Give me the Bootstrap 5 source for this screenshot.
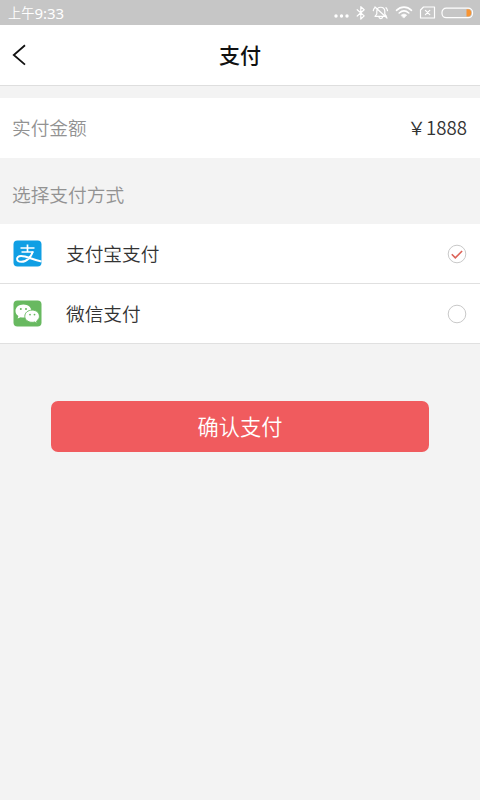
<!DOCTYPE html>
<html lang="zh-CN">
<head>
<meta charset="utf-8">
<meta name="viewport" content="width=device-width, initial-scale=1">
<title>支付</title>
<link href="https://cdn.jsdelivr.net/npm/bootstrap@5.3.0/dist/css/bootstrap.min.css" rel="stylesheet">
<style>
body{background:#f3f3f3;font-family:"Noto Sans CJK SC",sans-serif;font-size:18.7px;font-weight:350;line-height:28px;color:#333;min-height:800px}
svg{display:block;flex:none}
.status-bar{height:25px;background:#c6c6c6;color:#fff;font-size:13.2px;padding:1px 6px 0 8px}
.clock{font-family:"Noto Sans",sans-serif;font-size:15px;font-weight:400;line-height:24px}
.title-bar{height:61px;border-bottom:1px solid #dedede}
.title-bar h1{font-size:21px;font-weight:500;color:#111;line-height:30px;padding-bottom:2px}
.back{width:40px;height:60px}
.amount{height:60px;margin-top:12px;padding:0 13px 2px 12px}
.muted{color:#929292}
.section-label{height:66px;padding:6px 12px 0}
.method{height:60px;padding:0 13px;border-bottom:1px solid #e0e0e0;cursor:pointer}
.method-name{margin-left:24px;padding-bottom:2px}
.confirm{margin:56.5px 51px 0;height:51.5px;border-radius:7px;background:#f05b5e;color:#fff;font-size:21.2px;font-weight:350}
.confirm:hover{background:#e44f53;color:#fff}
</style>
<script src="https://cdn.jsdelivr.net/npm/bootstrap@5.3.0/dist/js/bootstrap.bundle.min.js"></script>
</head>
<body>
<div class="status-bar d-flex align-items-center justify-content-between">
  <div class="d-flex align-items-center"><span>上午</span><span class="clock">9:33</span></div>
  <svg width="142" height="24" viewBox="332 .5 142 24" fill="none" stroke="#fff" stroke-width="1.2" stroke-linecap="round" stroke-linejoin="round">
    <g fill="#fff" stroke="none"><circle cx="336" cy="15.5" r="1.7"/><circle cx="341.5" cy="15.5" r="1.7"/><circle cx="347" cy="15.5" r="1.7"/></g>
    <path d="M357.2 9.2l7 6.2-3.4 3.1V6.2l3.4 3.1-7 6.2"/>
    <path d="M375 15.8h11.5l-1.7-2.3v-2.7c0-5.400-8-5.400-8 0v2.700zM378.800 16.200c.4 2.600 3.600 2.600 4 0M375 6.500l12 11M373.300 10.200c.2-1.300.6-2.200 1.500-3M387.500 10.200c-.2-1.300-.6-2.200-1.500-3"/>
    <path d="M396.500 9.800c4.500-4.200 10.500-4.200 15 0M399.200 12.500c3-2.600 6.600-2.600 9.600 0" stroke-width="1.600"/>
    <path d="M401.400 14.600c1.600-1.300 3.600-1.300 5.200 0L404 17.300z" fill="#fff" stroke-width=".8"/>
    <path d="M423.500 6.500h11v11h-14v-8zM425.400 9.800l4.400 4.400M429.800 9.800l-4.400 4.400"/>
    <rect x="442" y="7.600" width="30.500" height="9.600" rx="4.200"/>
    <path d="M466.500 8.800h1.800c4 0 4 7.200 0 7.200h-1.800z" fill="#f79433" stroke="none"/>
  </svg>
</div>
<header class="title-bar bg-white d-flex align-items-center">
  <a href="#" class="back d-flex align-items-center" aria-label="返回">
    <svg width="40" height="30" viewBox="0 40 40 30" fill="none" stroke="#111" stroke-width="1.8"><path d="M25 45.3L13.800 55 25 64.600"/></svg>
  </a>
  <h1 class="flex-grow-1 text-center mb-0">支付</h1>
  <div class="back"></div>
</header>
<main>
  <section class="amount bg-white d-flex align-items-center justify-content-between">
    <span class="muted">实付金额</span><span>￥1888</span>
  </section>
  <div class="section-label muted d-flex align-items-center">选择支付方式</div>
  <div class="method bg-white d-flex align-items-center">
    <svg width="29" height="27" viewBox="0 0 29 27">
      <rect x=".5" y=".5" width="28" height="26" rx="4" fill="#109fe4"/>
      <g fill="none" stroke="#fff" stroke-width="1.700">
        <path d="M7.500 8h14M14.500 4.500v7.500M8.500 12h12"/>
        <path d="M19.800 11.500c-1.500 4.800-5.500 10.300-11.500 10.300-5.300 0-5.800-5.600-.3-5.800 5.500-.2 11.500 3.900 20.500 5.400" stroke-width="2"/>
      </g>
    </svg>
    <span class="method-name flex-grow-1">支付宝支付</span>
    <svg width="20" height="20" viewBox="0 0 20 20" fill="none"><circle cx="10" cy="10" r="8.800" fill="#fff" stroke="#c9c9c9"/><path d="M4.800 10.300l3.500 3.600 6.800-6.900" stroke="#dc6257" stroke-width="1.600"/></svg>
  </div>
  <div class="method bg-white d-flex align-items-center">
    <svg width="29" height="27" viewBox="0 0 29 27">
      <rect x=".5" y=".5" width="28" height="26" rx="4" fill="#68b960"/>
      <path d="M10.400 4.600c-4.600 0-7.900 2.800-7.900 6.400 0 2.200 1.100 3.900 2.900 5.100L4.600 18.600l3.100-1.400c1.600.4 3.400.4 5 0 4-1 5.700-3.800 5.700-6.200 0-3.600-3.500-6.400-8-6.400z" fill="#fff"/>
      <path d="M19.200 10.100c-4.400 0-7.400 2.800-7.400 6.100s3 6.100 7.400 6.100c.9 0 1.700-.1 2.400-.4l2.600 1.400-.6-2.300c1.800-1.200 2.800-2.900 2.800-4.800 0-3.300-3-6.100-7.200-6.100z" fill="#fff" stroke="#68b960" stroke-width=".9"/>
      <g fill="#68b960"><circle cx="7.800" cy="9" r="1"/><circle cx="13" cy="9" r="1"/><circle cx="17" cy="14.600" r=".9"/><circle cx="21.500" cy="14.600" r=".9"/></g>
    </svg>
    <span class="method-name flex-grow-1">微信支付</span>
    <svg width="20" height="20" viewBox="0 0 20 20"><circle cx="10" cy="10" r="8.800" fill="#fff" stroke="#c9c9c9"/></svg>
  </div>
  <div class="d-grid"><button type="button" class="confirm btn border-0 p-0">确认支付</button></div>
</main>
</body>
</html>
